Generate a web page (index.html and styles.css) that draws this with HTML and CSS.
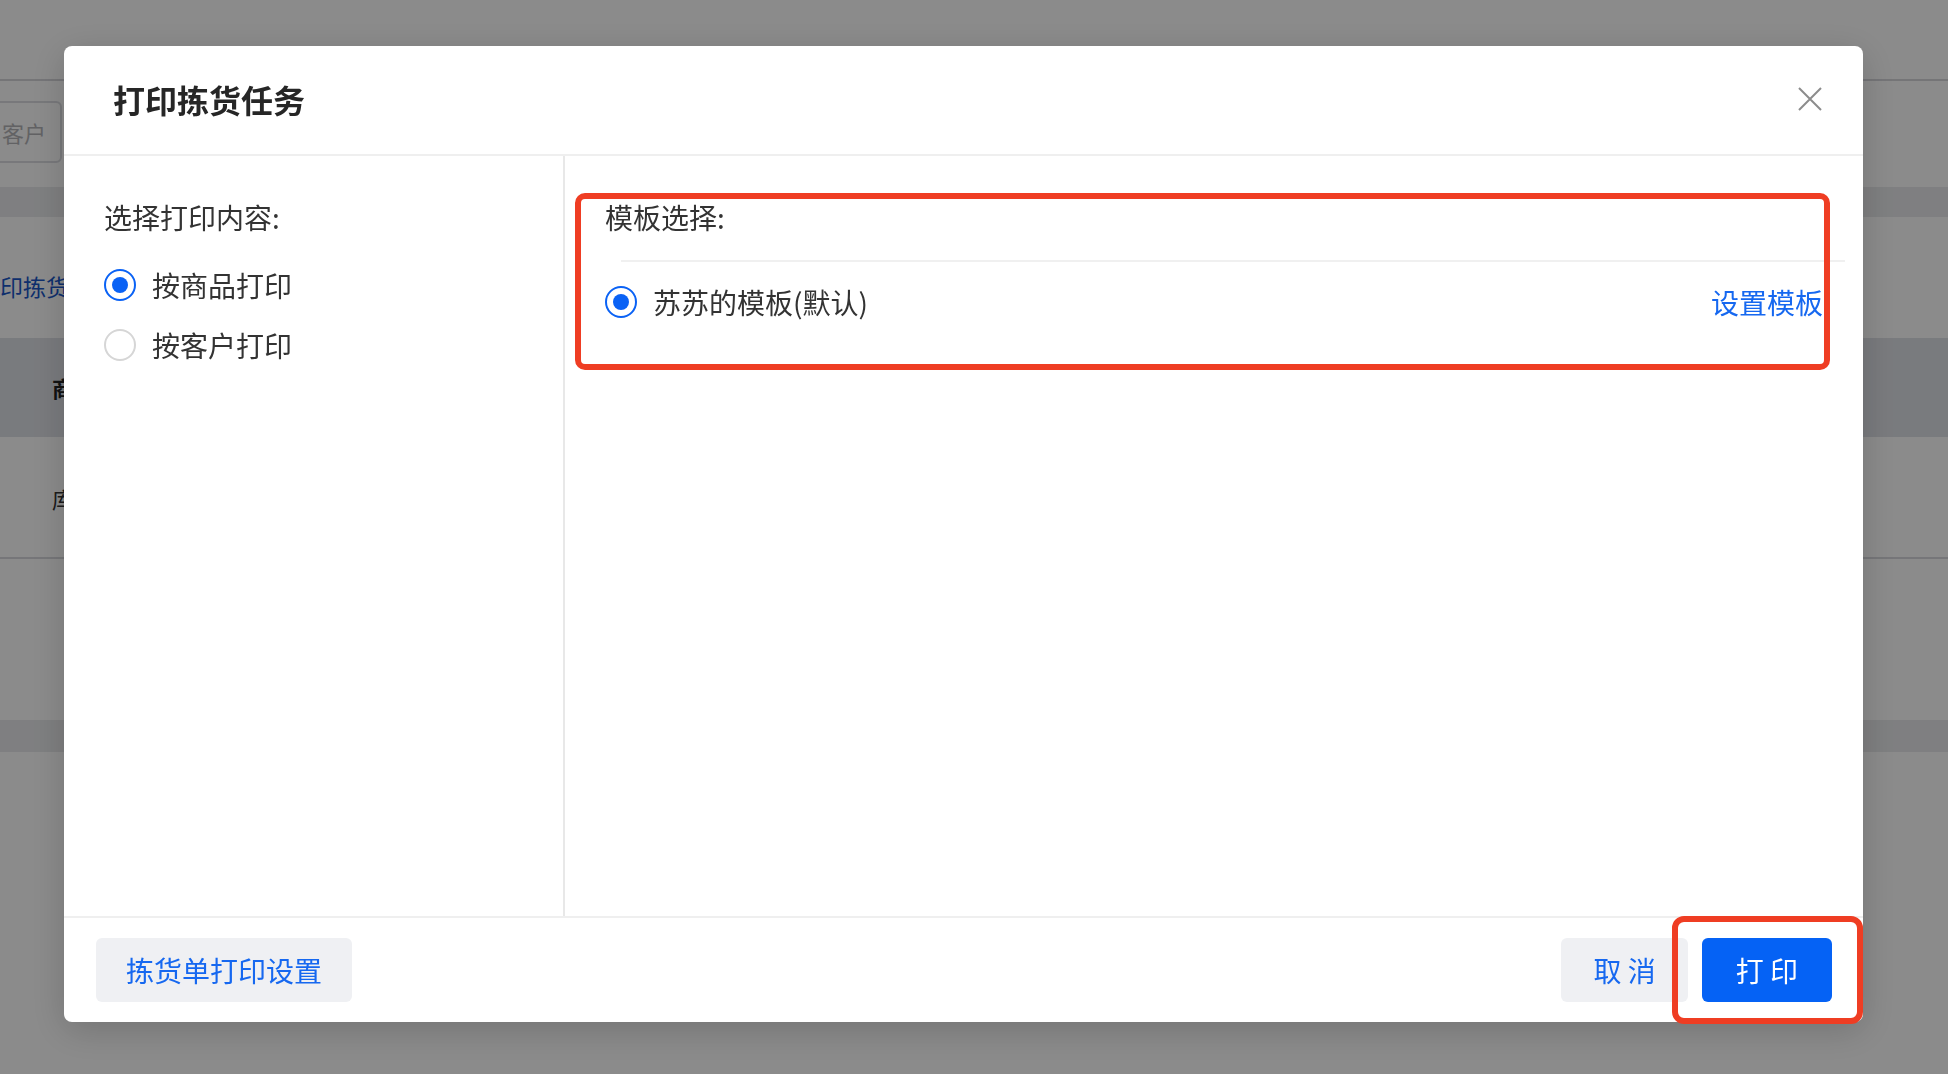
FILE: index.html
```html
<!DOCTYPE html>
<html lang="zh-CN">
<head>
  <meta charset="UTF-8" />
  <meta name="viewport" content="width=device-width, initial-scale=1.0" />
  <title>打印拣货任务</title>
  <link rel="stylesheet" href="styles.css">
</head>
<body>
  <!-- page behind the mask -->
  <div class="page">
    <div class="topbar"></div>
    <div class="filters">
      <div class="filter-input">客户</div>
    </div>
    <div class="gap-band"></div>
    <div class="tabs">
      <span class="tab-active">印拣货</span>
    </div>
    <div class="table-head"><span>商品</span></div>
    <div class="table-row"><span>库位</span></div>
    <div class="page-space"></div>
    <div class="gap-band tall"></div>
  </div>

  <div class="mask">
    <div class="dialog">
      <div class="dialog-header">
        <h2>打印拣货任务</h2>
        <button class="close" aria-label="关闭">
          <svg width="24" height="24" viewBox="0 0 24 24">
            <path d="M1 1L23 23M23 1L1 23" stroke="#8c8c8c" stroke-width="2" fill="none" />
          </svg>
        </button>
      </div>

      <div class="dialog-body">
        <div class="side">
          <div class="label">选择打印内容:</div>
          <label class="radio checked"><span class="dot"></span>按商品打印</label>
          <label class="radio"><span class="dot"></span>按客户打印</label>
        </div>
        <div class="main">
          <div class="label">模板选择:</div>
          <div class="tpl-list">
            <div class="tpl-row">
              <label class="radio checked"><span class="dot"></span>苏苏的模板(默认)</label>
              <a class="link" href="#">设置模板</a>
            </div>
          </div>
        </div>
      </div>

      <div class="dialog-footer">
        <button class="btn">拣货单打印设置</button>
        <div class="footer-right">
          <button class="btn">取 消</button>
          <button class="btn primary">打 印</button>
        </div>
      </div>

      <!-- red highlight marks -->
      <div class="mark mark-tpl"></div>
      <div class="mark mark-print"></div>
    </div>
  </div>
</body>
</html>
```

FILE: styles.css
```css
* {
  box-sizing: border-box;
  margin: 0;
  padding: 0;
}

body {
  font-family: "Noto Sans CJK SC", "Noto Sans", sans-serif;
  background: #ffffff;
  color: #333333;
  overflow: hidden;
}

/* background page */
.page {
  width: 100%;
  height: 1074px;
  background: #ffffff;
}

.topbar {
  height: 81px;
  border-bottom: 2px solid #d6d6db;
}

.filters {
  height: 106px;
  padding-top: 20px;
}

.filter-input {
  margin-left: -60px;
  width: 122px;
  height: 62px;
  border: 2px solid #dcdde2;
  border-radius: 6px;
  padding-left: 60px;
  font-size: 22px;
  line-height: 58px;
  white-space: nowrap;
  color: #b4b4b8;
}

.gap-band {
  height: 30px;
  background: #e9eaec;
}

.gap-band.tall {
  height: 32px;
}

.tabs {
  height: 121px;
  padding-top: 54px;
  background: #ffffff;
}

.tab-active {
  display: inline-block;
  font-size: 23px;
  line-height: 30px;
  white-space: nowrap;
  color: #1a57c8;
}

.table-head {
  height: 99px;
  background: #dfe1e7;
  padding-left: 52px;
  font-size: 22px;
  font-weight: 700;
  line-height: 99px;
  color: #222222;
}

.table-row {
  height: 122px;
  padding-left: 52px;
  font-size: 22px;
  line-height: 122px;
  border-bottom: 2px solid #d8d9de;
  color: #333333;
}

.page-space {
  height: 161px;
}

/* mask + dialog */
.mask {
  position: fixed;
  inset: 0;
  background: rgba(0, 0, 0, 0.455);
  padding: 46px 0 0 64px;
}

.dialog {
  position: relative;
  width: 1799px;
  background: #ffffff;
  border-radius: 8px;
  box-shadow: 0 8px 36px rgba(0, 0, 0, 0.18);
}

.dialog-header {
  height: 110px;
  display: flex;
  align-items: center;
  justify-content: space-between;
  padding: 0 41px 3px 49px;
  border-bottom: 2px solid #efefef;
}

.dialog-header h2 {
  font-size: 32px;
  font-weight: 700;
  line-height: 44px;
  color: #262626;
}

.close {
  display: flex;
  border: none;
  background: none;
  cursor: pointer;
}

.dialog-body {
  height: 760px;
  display: flex;
}

.side {
  width: 501px;
  border-right: 2px solid #e8e8e8;
  padding: 41px 40px 0 40px;
}

.label {
  font-size: 28px;
  line-height: 40px;
  color: #333333;
}

.side .label {
  margin-bottom: 18px;
}

.radio {
  display: flex;
  align-items: center;
  gap: 16px;
  height: 60px;
  font-size: 28px;
  line-height: 40px;
  color: #333333;
}

.dot {
  width: 32px;
  height: 32px;
  border-radius: 50%;
  border: 2px solid #d6d6d6;
  display: flex;
  align-items: center;
  justify-content: center;
  flex-shrink: 0;
}

.radio.checked .dot {
  border: 2.5px solid #0a62f5;
}

.radio.checked .dot::after {
  content: "";
  width: 16px;
  height: 16px;
  border-radius: 50%;
  background: #0a62f5;
}

.main {
  flex: 1;
  padding: 41px 40px 0 40px;
}

.tpl-list {
  margin: 23px -22px 0 16px;
  border-top: 2px solid #f0f0f0;
}

.tpl-row {
  display: flex;
  align-items: center;
  justify-content: space-between;
  margin-left: -16px;
  margin-right: 22px;
  padding: 20px 0;
}

.tpl-row .radio {
  height: 40px;
}

.link {
  font-size: 28px;
  line-height: 40px;
  color: #1668f0;
  text-decoration: none;
}

.dialog-footer {
  display: flex;
  align-items: center;
  justify-content: space-between;
  border-top: 2px solid #efefef;
  padding: 20px 31px 20px 32px;
}

.footer-right {
  display: flex;
  gap: 14px;
}

.btn {
  height: 64px;
  padding: 0 30px;
  border: none;
  border-radius: 6px;
  background: #eff0f3;
  color: #1668f0;
  font-family: inherit;
  font-size: 28px;
  line-height: 40px;
  cursor: pointer;
}

.footer-right .btn {
  padding: 0 32px;
}

.footer-right .btn.primary {
  padding: 0 34px;
  background: #0562f5;
  color: #ffffff;
}

/* annotation boxes drawn over the dialog */
.mark {
  position: absolute;
  border: 6px solid #ef3d23;
  pointer-events: none;
}

.mark-tpl {
  left: 511px;
  top: 147px;
  width: 1255px;
  height: 177px;
  border-radius: 10px;
}

.mark-print {
  left: 1608px;
  top: 870px;
  width: 191px;
  height: 108px;
  border-radius: 12px;
}
```
